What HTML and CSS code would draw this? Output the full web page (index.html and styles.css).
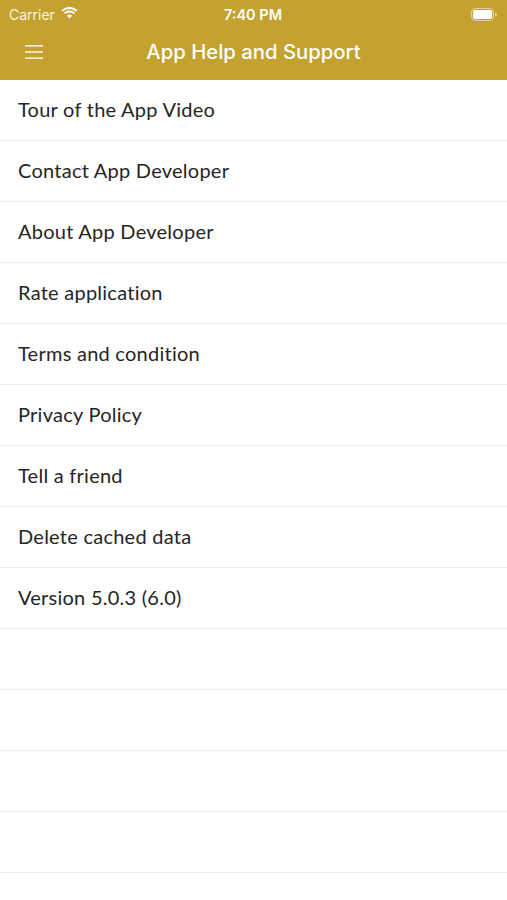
FILE: index.html
```html
<!DOCTYPE html>
<html>
<head>
<meta charset="utf-8">
<link rel="stylesheet" href="styles.css">
</head>
<body>
<div class="top">
  <div class="status">
    <div class="status-left">
      <span class="carrier">Carrier</span>
      <svg class="wifi" width="17" height="12" viewBox="0 0 17 12">
        <path d="M8.5 11.5 L5.9 8.7 A3.8 3.8 0 0 1 11.1 8.7 Z" fill="#fff"/>
        <path d="M3.6 6.4 A7 7 0 0 1 13.4 6.4" stroke="#fff" stroke-width="2" fill="none"/>
        <path d="M1.2 3.9 A10.5 10.5 0 0 1 15.8 3.9" stroke="#fff" stroke-width="2" fill="none"/>
      </svg>
    </div>
    <div class="time">7:40 PM</div>
    <div class="status-right">
      <svg width="26" height="13" viewBox="0 0 26 13">
        <rect x="0.5" y="0.5" width="22" height="12" rx="3.5" fill="none" stroke="rgba(255,255,255,0.5)"/>
        <rect x="2" y="2" width="19" height="9" rx="2" fill="#fff"/>
        <path d="M24 4.5 v4 a2 2 0 0 0 0 -4z" fill="rgba(255,255,255,0.5)"/>
      </svg>
    </div>
  </div>
  <div class="navbar">
    <svg class="menu" width="18" height="16" viewBox="0 0 18 16">
      <rect x="0" y="1" width="18" height="1.6" fill="#fff" fill-opacity="0.85"/>
      <rect x="0" y="7.2" width="18" height="1.6" fill="#fff" fill-opacity="0.85"/>
      <rect x="0" y="13.4" width="18" height="1.6" fill="#fff" fill-opacity="0.85"/>
    </svg>
    <div class="title">App Help and Support</div>
  </div>
</div>
<ul class="list">
  <li class="row">Tour of the App Video</li>
  <li class="row">Contact App Developer</li>
  <li class="row">About App Developer</li>
  <li class="row">Rate application</li>
  <li class="row">Terms and condition</li>
  <li class="row">Privacy Policy</li>
  <li class="row">Tell a friend</li>
  <li class="row">Delete cached data</li>
  <li class="row">Version 5.0.3 (6.0)</li>
  <li class="row"></li>
  <li class="row"></li>
  <li class="row"></li>
  <li class="row"></li>
</ul>
</body>
</html>
```

FILE: styles.css
```css
* { box-sizing: border-box; }
html, body {
  margin: 0;
  padding: 0;
  background: #fff;
  font-family: "Lato", "Noto Sans", sans-serif;
  width: 507px;
  height: 900px;
  overflow: hidden;
}
.top {
  background: #c4a22f;
  color: #fff;
}
.status {
  height: 28px;
  display: flex;
  align-items: center;
  justify-content: space-between;
  padding: 0 10px 0 9px;
  font-family: "Inter", "Liberation Sans", sans-serif;
  font-size: 14px;
}
.status-left {
  display: flex;
  align-items: center;
  gap: 6px;
  width: 110px;
  color: rgba(255,255,255,0.9);
}
.wifi { margin-top: -3px; }
.time {
  font-weight: 600;
  font-size: 14.5px;
}
.status-right {
  width: 110px;
  display: flex;
  justify-content: flex-end;
}
.navbar {
  height: 52px;
  position: relative;
  display: flex;
  align-items: center;
  justify-content: center;
}
.menu {
  position: absolute;
  left: 25px;
  top: 16px;
}
.title {
  font-family: "Inter", "Liberation Sans", sans-serif;
  font-size: 20.3px;
  font-weight: 500;
  margin-top: -5px;
}
.list {
  list-style: none;
  margin: 0;
  padding: 0;
}
.row {
  height: 61px;
  border-bottom: 1.5px solid #ececec;
  display: flex;
  align-items: center;
  padding-left: 18px;
  font-size: 20px;
  letter-spacing: 0.25px;
  color: #252525;
  padding-bottom: 2px;
}
```
